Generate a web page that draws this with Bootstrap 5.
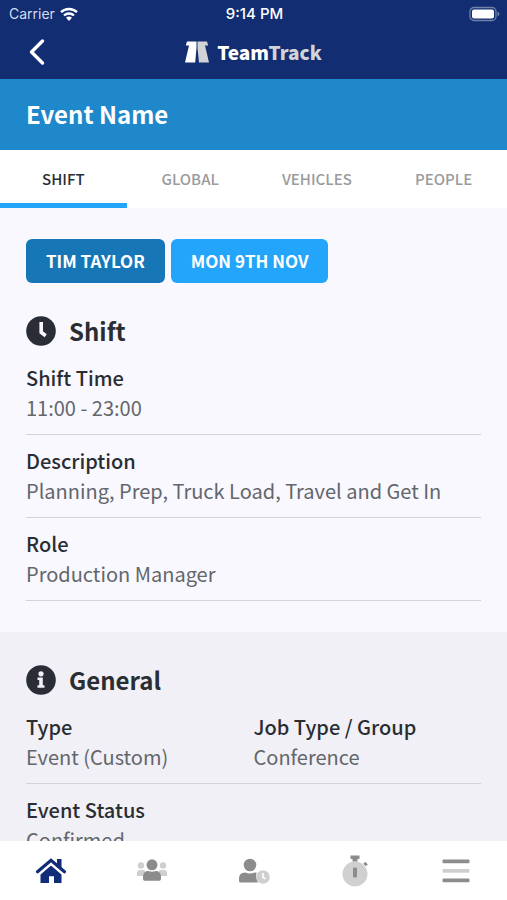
<!DOCTYPE html>
<html lang="en">
<head>
<meta charset="utf-8">
<meta name="viewport" content="width=device-width, initial-scale=1">
<title>TeamTrack – Event Name</title>
<link href="https://cdn.jsdelivr.net/npm/bootstrap@5.3.0/dist/css/bootstrap.min.css" rel="stylesheet">
<style>
  body { font-family: "Noto Sans CJK SC", "Open Sans", sans-serif; color: #2a2d32; background: #f8f8fe; }
  .app-header { background: #122d71; color: #fff; }
  .status-row { font-family: Inter, "Liberation Sans", sans-serif; font-size: 14px; line-height: 28px; padding: 0 7px 0 9px; }
  .status-row .carrier { color: #d5dcec; }
  .status-row .clock { font-size: 15px; font-weight: 500; }
  .brand-row { height: 51px; padding: 0 26px 3px; }
  .brand-text { font-size: 19px; line-height: 28px; font-weight: 900; }
  .brand-text span { color: #d2d3d6; }
  .event-bar { background: #1e88cb; color: #fff; padding: 18px 26px 19px; }
  .event-bar h1 { font-size: 24px; line-height: 34px; font-weight: 700; }
  .tab-btn { border: 0; border-bottom: 5px solid #fff; background: #fff; color: #999b9d; font-size: 15px; line-height: 24px; font-weight: 500; padding: 17px 0 12px; }
  .tab-btn.active { color: #2a2d32; border-bottom-color: #22a5f7; }
  .scroll-area { min-height: 0; overflow-y: auto; scrollbar-width: none; }
  .scroll-area::-webkit-scrollbar { display: none; }
  .block { padding: 31px 26px; }
  .block-alt { background: #f0f0f6; }
  .pill { --bs-btn-color: #fff; --bs-btn-hover-color: #fff; border: 0; border-radius: 6px; font-size: 17px; line-height: 24px; font-weight: 700; padding: 10px 20px; }
  .pill-person { background: #1777b6; }
  .pill-date { background: #22a5fb; }
  .block h2 { font-size: 24px; line-height: 34px; font-weight: 700; }
  .head-row { gap: 13px; margin-bottom: 4px; }
  .pills-row { gap: 6px; margin-bottom: 31px; }
  .field { border-bottom: 1px solid #d3d4da; padding: 11px 0; font-size: 20px; line-height: 30px; }
  .field dt { font-weight: 500; }
  .field dd { color: #63666b; margin: 0; }
  .bottom-bar { background: #fff; height: 59px; }
  .bottom-bar a { display: flex; align-items: center; justify-content: center; }
</style>
<script src="https://cdn.jsdelivr.net/npm/bootstrap@5.3.0/dist/js/bootstrap.bundle.min.js"></script>
</head>
<body>
<div class="d-flex flex-column vh-100">
  <header class="app-header">
    <div class="status-row row g-0 align-items-center">
      <div class="col d-flex align-items-center gap-1">
        <span class="carrier">Carrier</span>
        <svg width="20" height="16" viewBox="0 0 20 16" fill="none" stroke="#fff" stroke-width="2.4" aria-hidden="true">
          <path d="M2 6.2a11.6 11.6 0 0 1 16 0M5 9.5a7.3 7.3 0 0 1 10 0"/>
          <path d="M10 15l-3-3.200a4.400 4.400 0 0 1 6 0z" fill="#fff" stroke="none"/>
        </svg>
      </div>
      <div class="col-auto clock">9:14 PM</div>
      <div class="col d-flex justify-content-end align-items-center">
        <svg width="31" height="16" viewBox="0 0 31 16" aria-hidden="true">
          <rect x="1" y="1.500" width="26" height="13" rx="4" fill="none" stroke="#7181aa" stroke-width="1.300"/>
          <rect x="3" y="3.500" width="22" height="9" rx="2" fill="#fff"/>
          <path d="M28.500 5.800v4.400q2-.6 2-2.200t-2-2.200z" fill="#7181aa"/>
        </svg>
      </div>
    </div>
    <div class="brand-row row g-0 align-items-center">
      <div class="col">
        <button type="button" class="btn p-0 border-0 d-flex" aria-label="Back">
          <svg width="22" height="28" viewBox="0 0 22 28" fill="none" stroke="#fff" stroke-width="3.400" stroke-linecap="round" stroke-linejoin="round"><path d="M16.500 3L5.500 14l11 11"/></svg>
        </button>
      </div>
      <div class="col-auto d-flex align-items-center gap-2">
        <svg width="24" height="22" viewBox="0 0 24 22" aria-hidden="true">
          <path d="M2 .5H11.500V7L10.200 21.500H0L4 4.500H.8z" fill="#fff"/>
          <path d="M12.500.5H22L23.200 4.500H20L24 21.500H14L12.500 7z" fill="#d2d3d6"/>
        </svg>
        <div class="brand-text">Team<span>Track</span></div>
      </div>
      <div class="col"></div>
    </div>
  </header>

  <div class="event-bar"><h1 class="m-0">Event Name</h1></div>

  <div class="row g-0" role="tablist">
    <button type="button" role="tab" aria-selected="true" class="tab-btn col active">SHIFT</button>
    <button type="button" role="tab" aria-selected="false" class="tab-btn col">GLOBAL</button>
    <button type="button" role="tab" aria-selected="false" class="tab-btn col">VEHICLES</button>
    <button type="button" role="tab" aria-selected="false" class="tab-btn col">PEOPLE</button>
  </div>

  <main class="scroll-area flex-grow-1">
    <section class="block">
      <div class="pills-row d-flex flex-wrap">
        <button type="button" class="btn pill pill-person">TIM TAYLOR</button>
        <button type="button" class="btn pill pill-date">MON 9TH NOV</button>
      </div>
      <div class="head-row d-flex align-items-center">
        <svg width="30" height="30" viewBox="0 0 30 30" aria-hidden="true">
          <circle cx="15" cy="15" r="14.800" fill="#2a2d35"/>
          <path d="M15.200 6v10.300l4.500 3.400" fill="none" stroke="#f8f8fe" stroke-width="3.600"/>
        </svg>
        <h2 class="m-0">Shift</h2>
      </div>
      <dl class="m-0">
        <div class="field"><dt>Shift Time</dt><dd>11:00 - 23:00</dd></div>
        <div class="field"><dt>Description</dt><dd>Planning, Prep, Truck Load, Travel and Get In</dd></div>
        <div class="field"><dt>Role</dt><dd>Production Manager</dd></div>
      </dl>
    </section>

    <section class="block block-alt">
      <div class="head-row d-flex align-items-center">
        <svg width="30" height="30" viewBox="0 0 30 30" aria-hidden="true">
          <circle cx="15" cy="15" r="14.800" fill="#2a2d35"/>
          <g fill="#f0f0f6"><circle cx="15" cy="8.800" r="2.600"/><path d="M11.500 12.500h5.300v7.700h1.700v2.600h-7v-2.600h1.700v-5.100h-1.700z"/></g>
        </svg>
        <h2 class="m-0">General</h2>
      </div>
      <dl class="m-0">
        <div class="field row g-0">
          <div class="col-6"><dt>Type</dt><dd>Event (Custom)</dd></div>
          <div class="col-6"><dt>Job Type / Group</dt><dd>Conference</dd></div>
        </div>
        <div class="field"><dt>Event Status</dt><dd>Confirmed</dd></div>
      </dl>
    </section>
  </main>

  <nav class="bottom-bar row g-0 flex-shrink-0" aria-label="Main">
    <a class="col" href="#" aria-label="Home">
      <svg width="32" height="28" viewBox="0 0 32 28" fill="#122d78">
        <path d="M16 8.500L26.500 17.500V26H19V19.200H14V26H5.500V17.500z"/>
        <path d="M22 2h4.500v9H22z"/>
        <path d="M2.500 14.800L16 3.300l13.500 11.500" fill="none" stroke="#122d78" stroke-width="3.200" stroke-linecap="round"/>
        <path d="M4.500 17.100L16 7.300l11.500 9.800" fill="none" stroke="#fff" stroke-width="1.200"/>
      </svg>
    </a>
    <a class="col" href="#" aria-label="Teams">
      <svg width="32" height="28" viewBox="0 0 32 28">
        <g fill="#cfcfcf"><circle cx="5" cy="8.500" r="3.200"/><circle cx="27" cy="8.500" r="3.200"/><path d="M1 19v-3q0-3 3-3h3q1.600 0 2.300 1L6.500 19zM31 19v-3q0-3-3-3h-3q-1.600 0-2.300 1l2.800 5z"/></g>
        <g fill="#8c8c8c"><circle cx="16" cy="7.800" r="5.500"/><path d="M7 22v-2.500q0-5.500 5.500-5.500 3.500 1.500 7 0 5.500 0 5.500 5.500v2.500q0 1.700-1.700 1.700H8.700Q7 23.700 7 22z"/></g>
      </svg>
    </a>
    <a class="col" href="#" aria-label="Availability">
      <svg width="32" height="28" viewBox="0 0 32 28">
        <g fill="#8c8c8c"><circle cx="12" cy="8" r="6.300"/><path d="M1 24v-2.500q0-6 6-6 5 2 9.600 0 1.200 0 2.100.3Q17 19.800 20 25.500H2.500Q1 25.500 1 24z"/></g>
        <circle cx="25" cy="20" r="6.800" fill="#cfcfcf"/>
        <path d="M25 16v4.500l2.500 1.300" fill="none" stroke="#fff" stroke-width="1.600"/>
      </svg>
    </a>
    <a class="col" href="#" aria-label="Timer">
      <svg width="28" height="32" viewBox="0 0 28 32">
        <circle cx="14" cy="19" r="12.500" fill="#d0d0d0"/>
        <path d="M9.500.5h9V4H16.500V6.500h-5V4H9.500z" fill="#8c8c8c"/>
        <path d="M22.800 8.800l1.500-1.500 2 2-1.500 1.500z" fill="#8c8c8c" stroke="#8c8c8c"/>
        <rect x="12" y="12.500" width="4" height="10" rx="1" fill="#8c8c8c"/>
      </svg>
    </a>
    <a class="col" href="#" aria-label="Menu">
      <svg width="28" height="28" viewBox="0 0 28 28">
        <rect x=".5" y="2.500" width="27" height="3.700" rx="1" fill="#8c8c8c"/>
        <rect x=".5" y="12" width="27" height="3.700" rx="1" fill="#cfcfcf"/>
        <rect x=".5" y="21.500" width="27" height="3.700" rx="1" fill="#8c8c8c"/>
      </svg>
    </a>
  </nav>
</div>
</body>
</html>
